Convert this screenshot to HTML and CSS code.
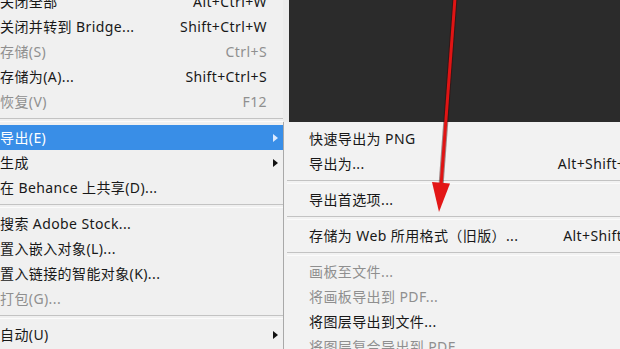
FILE: index.html
```html
<!DOCTYPE html>
<html lang="zh-CN">
  <head>
    <meta charset="UTF-8" />
    <meta name="viewport" content="width=device-width, initial-scale=1.0" />
    <title>文件 - 导出</title>
    <link rel="stylesheet" href="styles.css">
  </head>

  <body>
    <main class="screen">
      <ul class="menu main-menu">
        <li class="item"><span class="label">关闭全部</span><span class="key">Alt+Ctrl+W</span><span class="more"></span></li>
        <li class="item"><span class="label">关闭并转到 Bridge...</span><span class="key">Shift+Ctrl+W</span><span class="more"></span></li>
        <li class="item off"><span class="label">存储(S)</span><span class="key">Ctrl+S</span><span class="more"></span></li>
        <li class="item"><span class="label">存储为(A)...</span><span class="key">Shift+Ctrl+S</span><span class="more"></span></li>
        <li class="item off"><span class="label">恢复(V)</span><span class="key">F12</span><span class="more"></span></li>
        <li class="sep"></li>
        <li class="item active"><span class="label">导出(E)</span><span class="key"></span><span class="more"><i class="tri"></i></span></li>
        <li class="item"><span class="label">生成</span><span class="key"></span><span class="more"><i class="tri"></i></span></li>
        <li class="item"><span class="label">在 Behance 上共享(D)...</span><span class="key"></span><span class="more"></span></li>
        <li class="sep"></li>
        <li class="item"><span class="label">搜索 Adobe Stock...</span><span class="key"></span><span class="more"></span></li>
        <li class="item"><span class="label">置入嵌入对象(L)...</span><span class="key"></span><span class="more"></span></li>
        <li class="item"><span class="label">置入链接的智能对象(K)...</span><span class="key"></span><span class="more"></span></li>
        <li class="item off"><span class="label">打包(G)...</span><span class="key"></span><span class="more"></span></li>
        <li class="sep"></li>
        <li class="item"><span class="label">自动(U)</span><span class="key"></span><span class="more"><i class="tri"></i></span></li>
      </ul>

      <div class="side">
        <div class="canvas"></div>
        <ul class="menu sub-menu">
          <li class="item"><span class="label">快速导出为 PNG</span></li>
          <li class="item"><span class="label">导出为...</span><span class="key">Alt+Shift+Ctrl+W</span></li>
          <li class="sep"></li>
          <li class="item"><span class="label">导出首选项...</span></li>
          <li class="sep"></li>
          <li class="item"><span class="label">存储为 Web 所用格式（旧版）...</span><span class="key">Alt+Shift+Ctrl+S</span></li>
          <li class="sep"></li>
          <li class="item off"><span class="label">画板至文件...</span></li>
          <li class="item off"><span class="label">将画板导出到 PDF...</span></li>
          <li class="item"><span class="label">将图层导出到文件...</span></li>
          <li class="item off"><span class="label">将图层复合导出到 PDF...</span></li>
        </ul>
      </div>

      <!-- red pointer drawn over the screenshot -->
      <svg class="pointer" width="620" height="349" viewBox="0 0 620 349">
        <line x1="455" y1="-2" x2="441" y2="186" class="pointer-shadow" />
        <line x1="455" y1="-2" x2="441" y2="186" class="pointer-line" />
        <polygon points="432,182 450,183.5 439,212" class="pointer-head" />
      </svg>
    </main>
  </body>
</html>
```

FILE: styles.css
```css
* {
  margin: 0;
  padding: 0;
  box-sizing: border-box;
}

body {
  width: 620px;
  height: 349px;
  overflow: hidden;
  background-color: #f0f0f0;
  font-family: "Noto Sans", "Noto Sans CJK SC", sans-serif;
  font-size: 14px;
  letter-spacing: 0.4px;
  color: #181818;
}

.screen {
  position: relative;
  display: flex;
  height: 349px;
}

.menu {
  list-style: none;
}

.item {
  display: flex;
  align-items: center;
  flex-shrink: 0;
  height: 25px;
  line-height: 25px;
  white-space: nowrap;
}

.label {
  flex: 1;
}

.off {
  color: #8f8f8f;
}

.sep {
  height: 11px;
  flex-shrink: 0;
  display: flex;
  align-items: center;
}

.sep::after {
  content: "";
  display: block;
  width: 100%;
  height: 2px;
  border-top: 1px solid #c3c3c3;
  border-bottom: 1px solid #fbfbfb;
}

/* left: file menu */
.main-menu {
  width: 283px;
  flex-shrink: 0;
  margin-top: -11px;
  background-color: #f0f0f0;
}

.main-menu .key {
  text-align: right;
}

.main-menu .more {
  width: 16px;
  height: 25px;
  display: flex;
  align-items: center;
  padding-left: 6px;
}

.tri {
  display: block;
  width: 0;
  height: 0;
  border-left: 5px solid #111;
  border-top: 4px solid transparent;
  border-bottom: 4px solid transparent;
}

.active {
  background-color: #398ee7;
  color: #ffffff;
}

.active .tri {
  border-left-color: #dceaff;
}

/* right: workspace and export submenu */
.side {
  display: flex;
  flex-direction: column;
  flex-shrink: 0;
  width: 420px;
  height: 349px;
  overflow: hidden;
}

.canvas {
  height: 122px;
  flex-shrink: 0;
  background-color: #2b2b2b;
  border-left: 6px solid #ececec;
}

.sub-menu {
  flex: 1;
  display: flex;
  flex-direction: column;
  background-color: #f2f2f2;
  border-left: 1px solid #a9a9a9;
  padding: 4px 31px 0 0;
}

.sub-menu .label {
  padding-left: 25px;
}

.sub-menu .sep {
  padding-left: 3px;
}

.pointer {
  position: absolute;
  left: 0;
  top: 0;
  pointer-events: none;
}

.pointer-shadow {
  stroke: rgba(60, 0, 0, 0.45);
  stroke-width: 5;
}

.pointer-line {
  stroke: #e01414;
  stroke-width: 3;
}

.pointer-head {
  fill: #e31717;
}
```
